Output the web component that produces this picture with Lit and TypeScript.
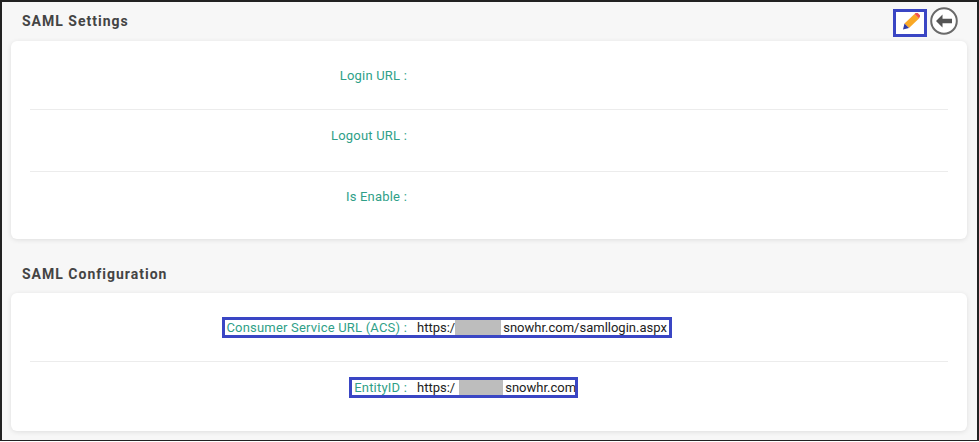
import { LitElement, html, css } from "lit";
import { customElement } from "lit/decorators.js";

@customElement("app-root")
export class AppRoot extends LitElement {
  static styles = css`
    :host { display: block; width: 979px; height: 442px; font-family: Roboto, "Liberation Sans", sans-serif; }
    * { box-sizing: border-box; }
    .frame { position: relative; width: 979px; height: 441px; background: #f7f7f7; border: 1px solid #222; border-left-width: 2px; border-top-width: 2px; border-right-width: 2px; padding: 0 10px 0 9px; overflow: hidden; }
    .head { height: 39px; display: flex; justify-content: space-between; padding: 0 9px 0 11px; }
    .head h2 { padding-top: 11px; }
    .head2 { height: 54px; padding: 16px 0 0 11px; display: flex; align-items: center; }
    h2 { margin: 0; font: 700 14px/16px Roboto, sans-serif; color: #444; letter-spacing: 1px; }
    .icons { display: flex; align-items: flex-start; gap: 3px; padding-top: 5px; }
    .pencil { width: 34px; height: 28px; margin-top: 2px; border: 3px solid #3a46c4; background: #fff; display: flex; align-items: center; justify-content: center; }
    .card { background: #fff; border-radius: 6px; box-shadow: 0 1px 5px rgba(0,0,0,.10); padding: 0 19px; }
    .c1 { height: 198px; }
    .c2 { height: 138px; }
    .row { display: grid; grid-template-columns: 377px 1fr; column-gap: 10px; align-items: start; font-size: 13px; line-height: 18px; height: 62px; padding-top: 17px; border-bottom: 1px solid #ececec; }
    .row:last-child { border-bottom: 0; padding-top: 16px; }
    .row:first-child { height: 69px; padding-top: 26px; }
    .c2 .row:last-child { padding-top: 17px; }
    .label { text-align: right; color: #2f9f88; letter-spacing: 0.2px; }
    .value { color: #222; white-space: nowrap; display: flex; align-items: center; }
    .blur { background: #bdbdbd; height: 16px; margin-right: 2px; }
    .b1 { width: 46px; }
    .b2 { width: 44px; margin-left: 4px; }
    .mark { position: absolute; border: 3px solid #3a46c4; pointer-events: none; }
    .m1 { left: 220px; top: 315px; width: 450px; height: 21px; }
    .m2 { left: 347px; top: 375px; width: 229px; height: 21px; }
  `;

  private url(rest: string, cls: string) {
    return html`<div class="value">https:/<span class="blur ${cls}"></span>${rest}</div>`;
  }

  render() {
    return html`<div class="frame">
      <div class="head">
        <h2>SAML Settings</h2>
        <div class="icons">
          <div class="pencil">
            <svg width="20" height="20" viewBox="0 0 20 20">
              <path d="M4.500 10.500 14.500 1 19 5.500 9 15z" fill="#f9a825"/>
              <path d="M14.500 1l1.500-1.400a1 1 0 0 1 1.400 0l2.600 2.600a1 1 0 0 1 0 1.400L19 5.500z" fill="#ef5350"/>
              <path d="M4.500 10.500 9 15 3 16.500z" fill="#2f3aa8"/>
            </svg>
          </div>
          <svg width="28" height="28" viewBox="0 0 28 28">
            <circle cx="14" cy="14" r="12.800" fill="#fff" stroke="#6a6a6a" stroke-width="2"/>
            <path d="M6 14l6.500-6.500v4.200H22v4.600h-9.500v4.200z" fill="#555"/>
          </svg>
        </div>
      </div>
      <div class="card c1">
        <div class="row"><div class="label">Login URL :</div><div></div></div>
        <div class="row"><div class="label">Logout URL :</div><div></div></div>
        <div class="row"><div class="label">Is Enable :</div><div></div></div>
      </div>
      <div class="head2"><h2>SAML Configuration</h2></div>
      <div class="card c2">
        <div class="row"><div class="label">Consumer Service URL (ACS) :</div>${this.url("snowhr.com/samllogin.aspx", "b1")}</div>
        <div class="row"><div class="label">EntityID :</div>${this.url("snowhr.com", "b2")}</div>
      </div>
      <div class="mark m1"></div>
      <div class="mark m2"></div>
    </div>`;
  }
}
